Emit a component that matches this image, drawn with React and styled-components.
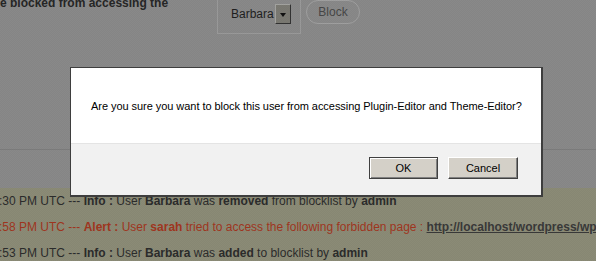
import styled, { createGlobalStyle } from "styled-components"

const GlobalStyle = createGlobalStyle`
  html, body {
    margin: 0;
    padding: 0;
    overflow: hidden;
    background: #898989;
    font-family: "Liberation Sans", Arial, sans-serif;
  }
`

const Page = styled.div`
  width: 596px;
  height: 261px;
  overflow: hidden;
`

const TopSection = styled.div`
  height: 149px;
  border-bottom: 1px solid #7c7c7c;
`

const FormRow = styled.div`
  display: flex;
  align-items: flex-start;
`

const Intro = styled.p`
  width: 217px;
  flex: none;
  margin: -4px 0 0;
  font-size: 12px;
  font-weight: bold;
  line-height: 14px;
  color: #262626;
  white-space: nowrap;
`

const UserBox = styled.div`
  display: flex;
  align-items: flex-start;
  width: 84px;
  height: 34px;
  box-sizing: border-box;
  padding: 4px 8px 0 13px;
  border: 1px solid #9a9a9a;
  border-top: none;
`

const Select = styled.div`
  display: flex;
  align-items: center;
  height: 20px;
  font-size: 12px;
  color: #1f1f1f;
`

const SelectArrow = styled.div`
  width: 16px;
  height: 20px;
  box-sizing: border-box;
  margin-left: 1px;
  background: #7a7972;
  border: 1px solid;
  border-color: #a3a3a0 #333 #333 #a3a3a0;
  display: flex;
  align-items: center;
  justify-content: center;

  &::after {
    content: "";
    border-left: 3.5px solid transparent;
    border-right: 3.5px solid transparent;
    border-top: 4px solid #111;
    margin-top: 1px;
  }
`

const PillButton = styled.button`
  margin: 0 0 0 5px;
  width: 54px;
  height: 24px;
  border: 1px solid #a0a0a0;
  border-radius: 12px;
  background: transparent;
  font-family: inherit;
  font-size: 12px;
  color: #474747;
  padding: 0;
`

const Gap = styled.div`
  height: 38px;
`

const LogList = styled.div`
  background: #8b8b76;
  height: 80px;
`

const LogLine = styled.div`
  font-size: 12px;
  line-height: 26px;
  white-space: nowrap;
  margin-left: -1px;
  color: ${props => (props.$alert ? "#a0361f" : "#2c2c2c")};

  b {
    font-weight: bold;
  }

  a {
    font-weight: bold;
    color: #393939;
    text-decoration: underline;
  }
`

const Overlay = styled.div`
  position: fixed;
  inset: 0;
  background: repeating-conic-gradient(rgba(0, 0, 0, 0.025) 0 25%, transparent 0 50%) 0 0 / 2px 2px;
`

const Dialog = styled.div`
  position: fixed;
  top: 67px;
  left: 70px;
  width: 473px;
  box-sizing: border-box;
  border: 1px solid #3e3e3e;
  border-right-width: 2px;
  border-bottom-width: 2px;
  background: #fff;
`

const Message = styled.div`
  height: 75px;
  display: flex;
  align-items: center;
  padding-left: 20px;
  font-size: 11px;
  letter-spacing: -0.05px;
  color: #000;
`

const Footer = styled.div`
  display: flex;
  justify-content: flex-end;
  gap: 10px;
  padding: 13px 23px 16px;
  background: #f1f1f1;
  border-top: 1px solid #e4e4e4;
`

const DialogButton = styled.button`
  width: ${props => props.$width}px;
  height: 22px;
  padding: 0;
  background: #d4d0c8;
  font-family: inherit;
  font-size: 11px;
  color: #000;
  border: 1px solid;
  border-color: ${props => (props.$default ? "#404040" : "#fff #404040 #404040 #fff")};
  box-shadow: ${props =>
    props.$default
      ? "inset 1px 1px 0 #fff, inset -1px -1px 0 #808080"
      : "inset -1px -1px 0 #808080"};
`

function App () {
  return (
    <>
      <GlobalStyle />
      <Page>
        <TopSection>
          <FormRow>
            <Intro>e blocked from accessing the</Intro>
            <UserBox>
              <Select>
                Barbara
                <SelectArrow />
              </Select>
            </UserBox>
            <PillButton>Block</PillButton>
          </FormRow>
        </TopSection>
        <Gap />
        <LogList>
          <LogLine>
            :30 PM UTC --- <b>Info :</b> User <b>Barbara</b> was <b>removed</b> from blocklist by <b>admin</b>
          </LogLine>
          <LogLine $alert>
            :58 PM UTC --- <b>Alert :</b> User <b>sarah</b> tried to access the following forbidden page : <a>http://localhost/wordpress/wp-admin/plugin-editor.php</a>
          </LogLine>
          <LogLine>
            :53 PM UTC --- <b>Info :</b> User <b>Barbara</b> was <b>added</b> to blocklist by <b>admin</b>
          </LogLine>
        </LogList>
      </Page>
      <Overlay />
      <Dialog>
        <Message>
          Are you sure you want to block this user from accessing Plugin-Editor and Theme-Editor?
        </Message>
        <Footer>
          <DialogButton $width={69} $default>OK</DialogButton>
          <DialogButton $width={70}>Cancel</DialogButton>
        </Footer>
      </Dialog>
    </>
  )
}

export default App
